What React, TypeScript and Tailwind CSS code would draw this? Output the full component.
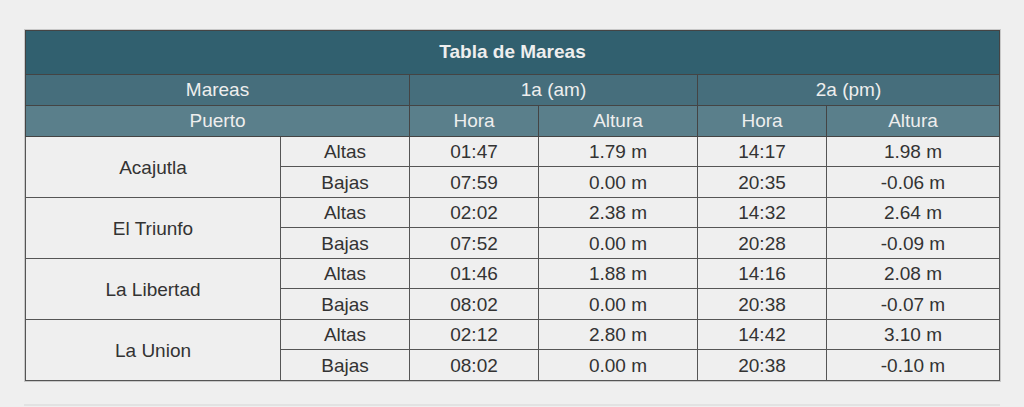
import React from "react";

const puertos = [
  {
    name: "Acajutla",
    altas: ["01:47", "1.79 m", "14:17", "1.98 m"],
    bajas: ["07:59", "0.00 m", "20:35", "-0.06 m"],
  },
  {
    name: "El Triunfo",
    altas: ["02:02", "2.38 m", "14:32", "2.64 m"],
    bajas: ["07:52", "0.00 m", "20:28", "-0.09 m"],
  },
  {
    name: "La Libertad",
    altas: ["01:46", "1.88 m", "14:16", "2.08 m"],
    bajas: ["08:02", "0.00 m", "20:38", "-0.07 m"],
  },
  {
    name: "La Union",
    altas: ["02:12", "2.80 m", "14:42", "3.10 m"],
    bajas: ["08:02", "0.00 m", "20:38", "-0.10 m"],
  },
];

const cell = "border border-[#555] h-[30.5px] p-0 pt-[1px] text-center leading-none";

const DataRow = ({ label, values }: { label: string; values: string[] }) => (
  <>
    <td className={cell}>{label}</td>
    <td className={`${cell} border-l-[#aaa]`}>{values[0]}</td>
    <td className={cell}>{values[1]}</td>
    <td className={cell}>{values[2]}</td>
    <td className={cell}>{values[3]}</td>
  </>
);

const App = () => {
  return (
    <div className="w-[1024px] h-[407px] bg-[#efefef] pt-[29px] font-['Liberation_Sans',Arial,sans-serif]">
      <div className="ml-[24px] w-[977px] border border-[#c8c8c8]">
        <table className="w-full table-fixed border-collapse text-[19px] text-[#333]">
          <colgroup>
            <col className="w-[255px]" />
            <col className="w-[129px]" />
            <col className="w-[129px]" />
            <col className="w-[159px]" />
            <col className="w-[129px]" />
            <col />
          </colgroup>
          <thead className="text-[#eeeeee]">
            <tr>
              <th colSpan={6} className="h-[44px] border border-[#444] bg-[#31606f] p-0 font-bold text-[19px]">
                Tabla de Mareas
              </th>
            </tr>
            <tr className="bg-[#466e7c]">
              <th colSpan={2} className="h-[31px] border border-[#444] p-0 pt-[1px] font-normal">Mareas</th>
              <th colSpan={2} className="border border-[#444] border-l-[#6f8e99] p-0 pt-[1px] font-normal">1a (am)</th>
              <th colSpan={2} className="border border-[#444] p-0 pt-[1px] font-normal">2a (pm)</th>
            </tr>
            <tr className="bg-[#5a7f8b]">
              <th colSpan={2} className="h-[29px] border border-[#444] p-0 pt-[1px] font-normal">Puerto</th>
              <th className="border border-[#444] border-l-[#7b98a2] p-0 pt-[1px] font-normal">Hora</th>
              <th className="border border-[#444] p-0 pt-[1px] font-normal">Altura</th>
              <th className="border border-[#444] p-0 pt-[1px] font-normal">Hora</th>
              <th className="border border-[#444] p-0 pt-[1px] font-normal">Altura</th>
            </tr>
          </thead>
          <tbody>
            {puertos.map((p) => (
              <React.Fragment key={p.name}>
                <tr>
                  <td rowSpan={2} className={cell}>
                    {p.name}
                  </td>
                  <DataRow label="Altas" values={p.altas} />
                </tr>
                <tr>
                  <DataRow label="Bajas" values={p.bajas} />
                </tr>
              </React.Fragment>
            ))}
          </tbody>
        </table>
      </div>
      <div className="ml-[24px] mt-[22px] w-[976px] h-[2px] bg-[#e2e2e2]" />
    </div>
  );
};

export default App;
